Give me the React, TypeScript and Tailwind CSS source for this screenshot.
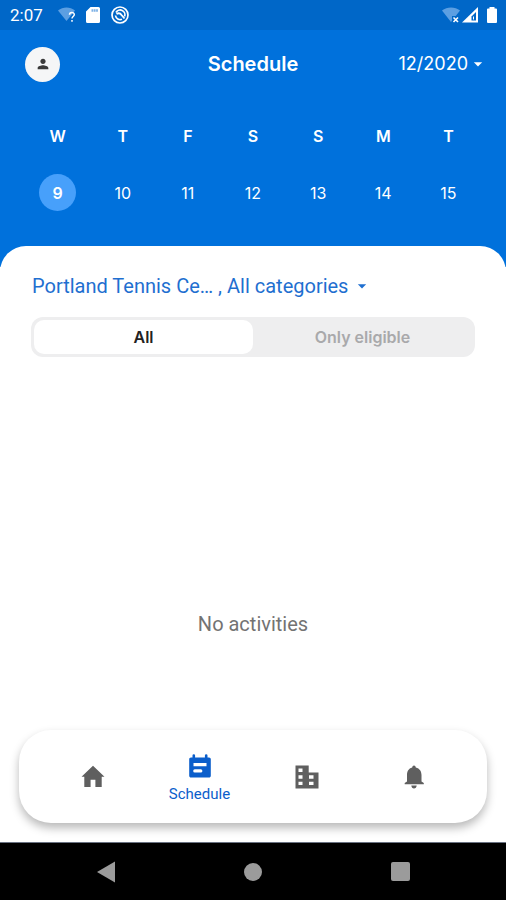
import React, { useState } from "react";
import { MdArrowDropDown, MdPerson } from "react-icons/md";

const days = [
  { label: "W", date: 9 },
  { label: "T", date: 10 },
  { label: "F", date: 11 },
  { label: "S", date: 12 },
  { label: "S", date: 13 },
  { label: "M", date: 14 },
  { label: "T", date: 15 },
];

const HomeIcon = () => (
  <svg viewBox="0 0 24 24" className="size-6" fill="currentColor" aria-hidden="true">
    <path d="M12 .8L.5 11.800h2.800V22h6.300v-7.300h4.800V22h6.300V11.800h2.800z" />
  </svg>
);

const ScheduleIcon = () => (
  <svg viewBox="0 0 24 24" className="size-6" fill="currentColor" aria-hidden="true">
    <path
      fillRule="evenodd"
      d="M4.500 1.500a1.300 1.300 0 0 1 2.600 0V3.500h9.800V1.500a1.300 1.300 0 0 1 2.600 0V3.500h1.500c1 0 1.800.8 1.800 1.800v16.400c0 1-.8 1.800-1.800 1.800H3c-1 0-1.800-.8-1.800-1.800V5.300c0-1 .8-1.800 1.800-1.800h1.500zM5.500 9v3.200h13V9zM6.800 15.300a1.600 1.600 0 0 0 0 3.200h6a1.600 1.600 0 0 0 0-3.200z"
    />
  </svg>
);

const BuildingIcon = () => (
  <svg viewBox="0 0 24 24" className="size-6" aria-hidden="true">
    <path fill="currentColor" d="M.5.500h13.200v7h9.800v16H.500z" />
    <path
      fill="#fff"
      d="M3.500 3.500h4v3.600h-4zM3.500 10.300h4v3.400h-4zM3.500 16.700h4v3.400h-4zM14 10.300h4.500v3.400H14zM14 16.700h4.500v3.400H14z"
    />
  </svg>
);

const BellIcon = () => (
  <svg viewBox="0 0 24 24" className="size-6" fill="currentColor" aria-hidden="true">
    <path d="M12 .5c1 0 1.600.8 1.800 2C17.800 3.500 19.500 6.500 19.500 10v6.500l2.300 1.500v1.200H2.700V18L5 16.500V10c0-3.500 1.500-6.500 5.200-7.500.2-1.200.8-2 1.800-2zM9.300 20.500h5.400c-.2 1.700-1.200 3-2.700 3s-2.500-1.300-2.700-3z" />
  </svg>
);

const StatusBar = () => (
  <div className="flex h-[30px] items-center justify-between bg-[#0067c8] pl-2.5 pr-2 text-white">
    <div className="flex items-center">
      <span className="w-12 font-[Roboto] text-[17px] leading-5">2:07</span>
      <svg viewBox="0 0 18 16" className="h-4 w-[18px]" aria-hidden="true">
        <path d="M0 3.500C5-.5 12-.5 17 3.500L8.500 14z" fill="#5c9fe2" />
        <path
          d="M11.500 7.800c0-3 4.800-3 4.800-.2 0 2-2.300 1.900-2.300 4M14 13v1.700"
          fill="none"
          stroke="#fff"
          strokeWidth="1.500"
        />
      </svg>
      <svg viewBox="0 0 14 16" className="ml-2.5 h-4 w-3.5" aria-hidden="true">
        <path d="M4.500 0H12.500a1.500 1.500 0 0 1 1.500 1.500v13a1.500 1.500 0 0 1-1.500 1.500h-11A1.500 1.500 0 0 1 0 14.500V4.500z" fill="#fff" />
        <path d="M5.500 3.500h6.500" stroke="#7fb2e6" strokeWidth="2.500" strokeDasharray="1.800 .5" />
      </svg>
      <svg viewBox="0 0 18 18" className="ml-[11px] size-[18px]" fill="none" stroke="#fff" aria-hidden="true">
        <circle cx="9" cy="9" r="8" strokeWidth="1.700" />
        <path d="M5 6.500a4.700 4.700 0 0 1 8.500 4M4.500 9.500a4.700 4.700 0 0 0 6.500 3.700" strokeWidth="1.700" />
        <path d="M5.500 8c2-1.200 4-.5 5 1l3 3.500" strokeWidth="1.900" />
      </svg>
    </div>
    <div className="flex items-center">
      <svg viewBox="0 0 18 16" className="h-4 w-[18px]" aria-hidden="true">
        <path d="M0 3.500C5-.5 13-.5 18 3.500L9 15z" fill="#5c9fe2" />
        <path d="M10 9h7v7h-7z" fill="#0067c8" />
        <path d="M11.500 10.500l4.500 4.500M16 10.500l-4.500 4.500" stroke="#fff" strokeWidth="1.600" />
      </svg>
      <svg viewBox="0 0 17 16" className="ml-0.5 h-4 w-[17px]" aria-hidden="true">
        <path d="M16 0V15.500H0z" fill="#fff" />
        <path d="M14 5v8.500h-4.500V9.500z" fill="#0067c8" />
        <path d="M11.500 9.500v3" stroke="#fff" strokeWidth="1" />
      </svg>
      <svg viewBox="0 0 12 16" className="ml-[7px] h-4 w-3" fill="#fff" aria-hidden="true">
        <path d="M3.500 0h5v1.500H10a1 1 0 0 1 1 1V15a1 1 0 0 1-1 1H2a1 1 0 0 1-1-1V2.500a1 1 0 0 1 1-1h1.500z" />
      </svg>
    </div>
  </div>
);

const SystemNav = () => (
  <div className="grid h-[58px] grid-cols-3 place-items-center border-t border-gray-500 bg-black px-8 text-[#9b9b9b]">
    <button aria-label="Back">
      <svg viewBox="0 0 20 22" className="h-[22px] w-5" fill="currentColor" aria-hidden="true">
        <path d="M19 .5v21L1 11z" />
      </svg>
    </button>
    <button aria-label="Home" className="size-[18px] rounded-full bg-current" />
    <button aria-label="Recents" className="size-[19px] rounded-xs bg-current" />
  </div>
);

export default function App() {
  const [selected, setSelected] = useState(9);
  const [filter, setFilter] = useState("all");

  return (
    <div className="flex min-h-screen flex-col bg-white font-[Inter,sans-serif]">
      <StatusBar />

      <header className="bg-[#0071dc] text-white">
        <div className="grid h-[68px] grid-cols-3 items-center px-[18px]">
          <button
            aria-label="Profile"
            className="ml-[7px] flex size-[35px] items-center justify-center rounded-full bg-[#f5f6f7] text-[#3a3a3a]"
          >
            <MdPerson className="size-4" />
          </button>
          <h1 className="text-center text-xl font-semibold">Schedule</h1>
          <button className="flex items-center justify-self-end text-lg">
            12/2020
            <MdArrowDropDown className="size-5" />
          </button>
        </div>

        <div className="grid grid-cols-7 px-[25px] pb-14 pt-6 text-center text-base">
          {days.map((day) => (
            <button
              key={day.date}
              onClick={() => setSelected(day.date)}
              className="flex flex-col items-center gap-6"
            >
              <span className="font-semibold leading-7">{day.label}</span>
              <span
                className={
                  selected === day.date
                    ? "flex size-[37px] items-center justify-center rounded-full bg-[#47a0fb] font-semibold"
                    : "flex size-[37px] items-center justify-center"
                }
              >
                {day.date}
              </span>
            </button>
          ))}
        </div>
      </header>

      <main className="-mt-[21px] flex flex-1 flex-col rounded-t-[26px] bg-white pt-7">
        <button className="mx-8 flex items-center self-start font-[Roboto] text-xl leading-6 text-[#1f6fd0]">
          Portland Tennis Ce… , All categories
          <MdArrowDropDown className="ml-1 size-5" />
        </button>

        <div className="mx-[31px] mt-[19px] grid h-10 grid-cols-2 rounded-xl bg-[#eeeeef] p-[3px] text-base font-semibold">
          <button
            onClick={() => setFilter("all")}
            className={filter === "all" ? "rounded-[10px] bg-white text-[#222]" : "text-[#a9a9ab]"}
          >
            All
          </button>
          <button
            onClick={() => setFilter("eligible")}
            className={filter === "eligible" ? "rounded-[10px] bg-white text-[#222]" : "text-[#a9a9ab]"}
          >
            Only eligible
          </button>
        </div>

        <div className="flex flex-1 items-end justify-center pb-[94px]">
          <p className="font-[Roboto] text-xl leading-6 text-[#737373]">No activities</p>
        </div>

        <nav className="mx-[19px] mb-[19px] grid h-[93px] grid-cols-4 place-items-center rounded-[32px] bg-white px-5 text-[#5f5f5f] shadow-[0_5px_10px_rgba(0,0,0,0.28)]">
          <a href="#home" aria-label="Home">
            <HomeIcon />
          </a>
          <a
            href="#schedule"
            className="flex flex-col items-center gap-1.5 pt-1 font-[Roboto] text-[15px] leading-5 text-[#0b5ecb]"
          >
            <ScheduleIcon />
            Schedule
          </a>
          <a href="#facilities" aria-label="Facilities">
            <BuildingIcon />
          </a>
          <a href="#notifications" aria-label="Notifications">
            <BellIcon />
          </a>
        </nav>
      </main>

      <SystemNav />
    </div>
  );
}
